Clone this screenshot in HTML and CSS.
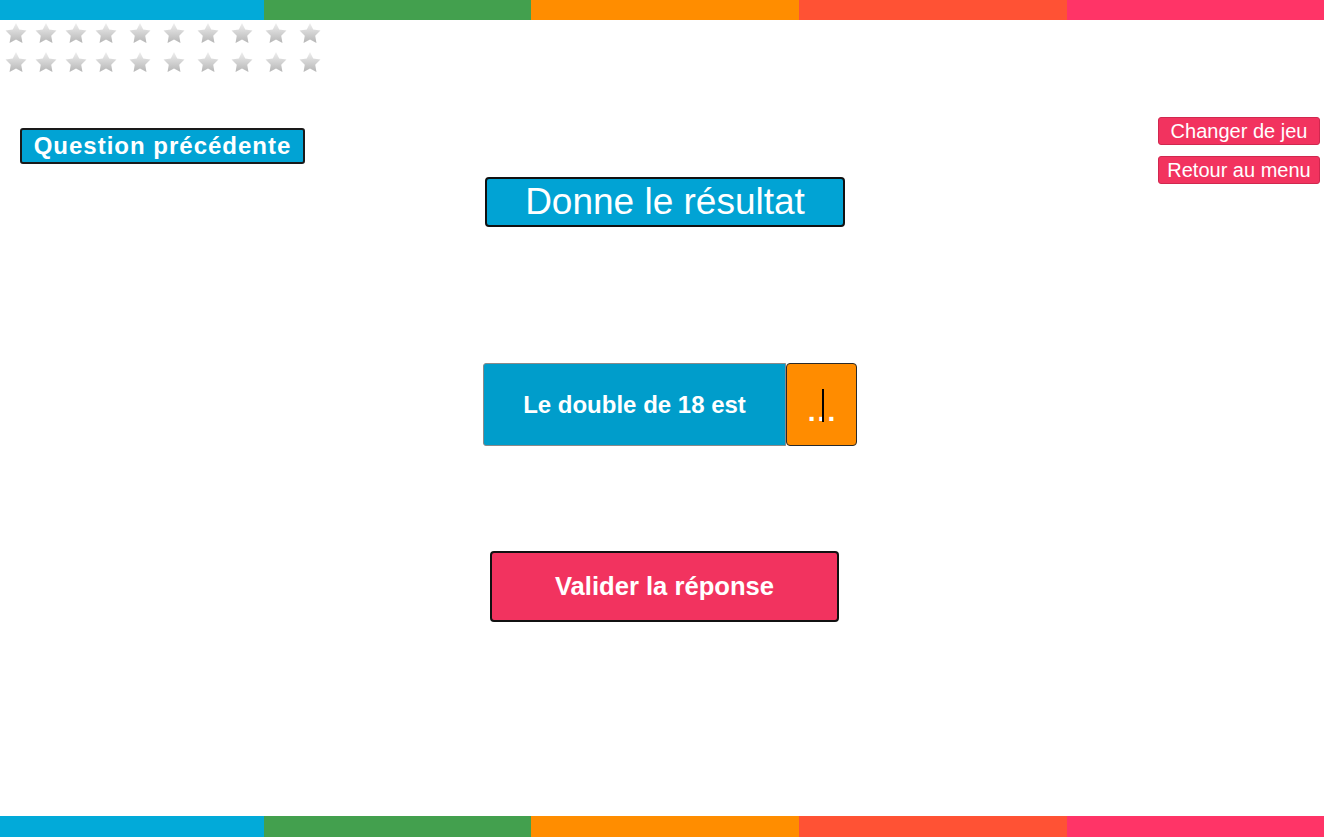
FILE: index.html
```html
<!DOCTYPE html>
<html lang="fr">
<head>
<meta charset="utf-8">
<title>Donne le résultat</title>
<link rel="stylesheet" href="styles.css">
</head>
<body>
<div class="page">
  <div class="colorbar">
    <span class="c1"></span><span class="c2"></span><span class="c3"></span><span class="c4"></span><span class="c5"></span>
  </div>
  <div class="header">
    <div class="left">
      <div class="stars">
        <svg class="star" viewBox="0 0 22 20"><use href="#s"/></svg>
        <svg class="star" viewBox="0 0 22 20"><use href="#s"/></svg>
        <svg class="star" viewBox="0 0 22 20"><use href="#s"/></svg>
        <svg class="star" viewBox="0 0 22 20"><use href="#s"/></svg>
        <svg class="star" viewBox="0 0 22 20"><use href="#s"/></svg>
        <svg class="star" viewBox="0 0 22 20"><use href="#s"/></svg>
        <svg class="star" viewBox="0 0 22 20"><use href="#s"/></svg>
        <svg class="star" viewBox="0 0 22 20"><use href="#s"/></svg>
        <svg class="star" viewBox="0 0 22 20"><use href="#s"/></svg>
        <svg class="star" viewBox="0 0 22 20"><use href="#s"/></svg>
      </div>
      <div class="stars">
        <svg class="star" viewBox="0 0 22 20"><use href="#s"/></svg>
        <svg class="star" viewBox="0 0 22 20"><use href="#s"/></svg>
        <svg class="star" viewBox="0 0 22 20"><use href="#s"/></svg>
        <svg class="star" viewBox="0 0 22 20"><use href="#s"/></svg>
        <svg class="star" viewBox="0 0 22 20"><use href="#s"/></svg>
        <svg class="star" viewBox="0 0 22 20"><use href="#s"/></svg>
        <svg class="star" viewBox="0 0 22 20"><use href="#s"/></svg>
        <svg class="star" viewBox="0 0 22 20"><use href="#s"/></svg>
        <svg class="star" viewBox="0 0 22 20"><use href="#s"/></svg>
        <svg class="star" viewBox="0 0 22 20"><use href="#s"/></svg>
      </div>
      <button class="prev">Question précédente</button>
    </div>
    <div class="right">
      <button class="nav">Changer de jeu</button>
      <button class="nav">Retour au menu</button>
    </div>
  </div>
  <div class="main">
    <div class="title">Donne le résultat</div>
    <div class="question">
      <div class="q-text">Le double de 18 est</div>
      <div class="q-answer"><span class="dots">...</span><span class="caret"></span></div>
    </div>
    <button class="validate">Valider la réponse</button>
  </div>
  <div class="colorbar bottom">
    <span class="c1"></span><span class="c2"></span><span class="c3"></span><span class="c4"></span><span class="c5"></span>
  </div>
</div>
<svg class="defs" width="0" height="0">
  <defs>
    <linearGradient id="g" x1="0" y1="0" x2="0" y2="1">
      <stop offset="0" stop-color="#efefef"/>
      <stop offset="1" stop-color="#b6b6b6"/>
    </linearGradient>
    <path id="s" fill="url(#g)" d="M11 0 L14.23 6.55 L21.46 7.6 L16.23 12.7 L17.47 19.9 L11 16.5 L4.53 19.9 L5.77 12.7 L0.54 7.6 L7.77 6.55 Z"/>
  </defs>
</svg>
</body>
</html>
```
FILE: styles.css
```css
html, body {
  margin: 0;
  padding: 0;
  background: #ffffff;
}
body {
  font-family: "Liberation Sans", Arial, sans-serif;
}
.page {
  display: flex;
  flex-direction: column;
  min-height: 100vh;
  box-sizing: border-box;
  padding-bottom: 1px;
}
.colorbar {
  display: flex;
  height: 20px;
  flex-shrink: 0;
}
.colorbar.bottom {
  height: 21px;
  margin-top: auto;
}
.colorbar span { flex: 0 0 auto; }
.c1 { background: #02aad9; width: 264px; }
.c2 { background: #43a04e; width: 267px; }
.c3 { background: #ff8d00; width: 268px; }
.c4 { background: #ff5234; width: 268px; }
.c5 { background: #ff3467; flex: 1 1 auto !important; }

.header {
  display: flex;
  justify-content: space-between;
  align-items: flex-start;
}
.left {
  display: flex;
  flex-direction: column;
  align-items: flex-start;
}
.stars {
  display: flex;
  gap: 8px;
  margin-left: 5px;
  margin-top: 3px;
  height: 20px;
}
.stars + .stars { margin-top: 9px; }
.star {
  width: 22px;
  height: 20px;
  display: block;
}
.star:nth-child(n+5) { margin-left: 4px; }
.defs { position: absolute; }

.prev {
  margin: 56px 0 0 20px;
  width: 285px;
  height: 36px;
  box-sizing: border-box;
  background: #01a3d4;
  border: 2px solid #1a1a1a;
  border-radius: 3px;
  color: #fff;
  font-family: "Liberation Sans", Arial, sans-serif;
  font-weight: bold;
  font-size: 24px;
  letter-spacing: 1px;
  padding: 0;
  line-height: 30px;
}
.right {
  display: flex;
  flex-direction: column;
  gap: 11px;
  margin: 97px 4px 0 0;
}
.nav {
  width: 162px;
  height: 28px;
  box-sizing: border-box;
  background: #f2335f;
  border: 1px solid #d0284f;
  border-radius: 3px;
  color: #fff;
  font-family: "Liberation Sans", Arial, sans-serif;
  font-size: 20px;
  padding: 0;
  line-height: 26px;
}

.main {
  display: flex;
  flex-direction: column;
  align-items: center;
}
.title {
  margin: -7px 0 0 6px;
  width: 360px;
  height: 50px;
  box-sizing: border-box;
  background: #01a3d4;
  border: 2px solid #111;
  border-radius: 4px;
  color: #fff;
  font-size: 37px;
  text-align: center;
  line-height: 46px;
}
.question {
  display: flex;
  margin: 136px 0 0 16px;
  height: 83px;
}
.q-text {
  width: 303px;
  box-sizing: border-box;
  background: #009dcb;
  border: 1px solid #8a8a8a;
  border-radius: 3px 0 0 3px;
  color: #fff;
  font-weight: bold;
  font-size: 24px;
  display: flex;
  align-items: center;
  justify-content: center;
}
.q-answer {
  position: relative;
  width: 71px;
  box-sizing: border-box;
  background: #ff8c00;
  border: 1px solid #2a2a2a;
  border-radius: 4px;
  color: #fff;
  font-weight: bold;
  font-size: 28px;
  display: flex;
  align-items: center;
  justify-content: center;
}
.dots {
  padding-top: 14px;
  letter-spacing: 2px;
  margin-right: -2px;
}
.caret {
  position: absolute;
  left: 35px;
  top: 25px;
  width: 2px;
  height: 33px;
  background: #000;
}
.validate {
  margin: 105px 0 0 5px;
  width: 349px;
  height: 71px;
  box-sizing: border-box;
  background: #f2335f;
  border: 2px solid #111;
  border-radius: 4px;
  color: #fff;
  font-family: "Liberation Sans", Arial, sans-serif;
  font-weight: bold;
  font-size: 25.6px;
  padding: 0;
}
```
